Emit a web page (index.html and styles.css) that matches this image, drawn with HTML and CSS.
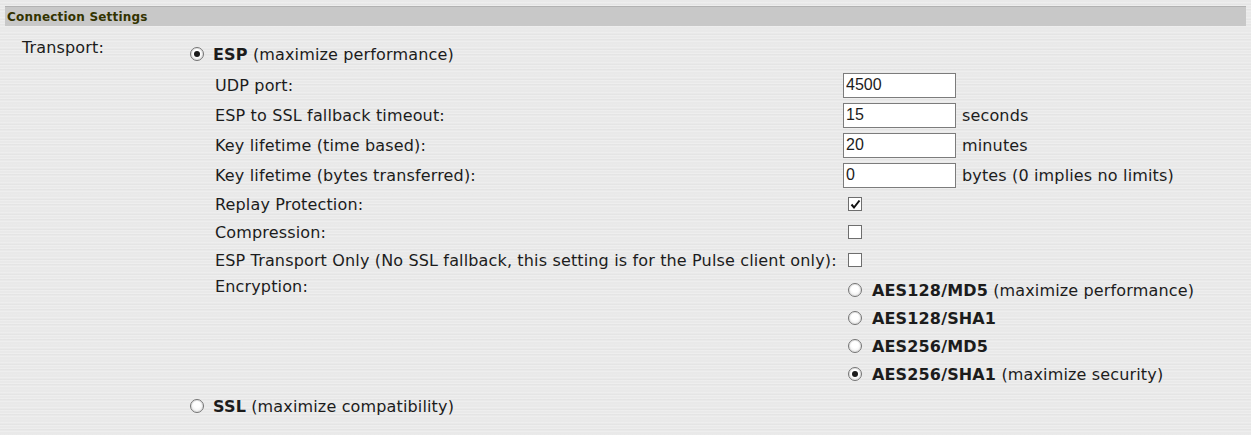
FILE: index.html
```html
<!DOCTYPE html>
<html>
<head>
<meta charset="utf-8">
<link rel="stylesheet" href="styles.css">
</head>
<body>
<div class="page">
  <div class="section-bar">Connection Settings</div>
  <div class="transport">
    <div class="field-label">Transport:</div>
    <div class="field-body">
      <div class="opt main-opt"><span class="radio checked"></span><span class="opt-text"><b>ESP</b> (maximize performance)</span></div>
      <div class="esp-grid">
        <div class="row input-row"><span class="lbl">UDP port:</span><span class="ctl"><input class="txt" type="text" value="4500"></span><span class="unit"></span></div>
        <div class="row input-row"><span class="lbl">ESP to SSL fallback timeout:</span><span class="ctl"><input class="txt" type="text" value="15"></span><span class="unit">seconds</span></div>
        <div class="row input-row"><span class="lbl">Key lifetime (time based):</span><span class="ctl"><input class="txt" type="text" value="20"></span><span class="unit">minutes</span></div>
        <div class="row input-row"><span class="lbl">Key lifetime (bytes transferred):</span><span class="ctl"><input class="txt" type="text" value="0"></span><span class="unit">bytes (0 implies no limits)</span></div>
        <div class="row check-row"><span class="lbl">Replay Protection:</span><span class="ctl"><span class="checkbox"><svg width="11" height="11" viewBox="0 0 11 11"><path d="M1.5 5.5 L4 8.5 L9.5 1.5" fill="none" stroke="#111" stroke-width="2"/></svg></span></span><span class="unit"></span></div>
        <div class="row check-row"><span class="lbl">Compression:</span><span class="ctl"><span class="checkbox"></span></span><span class="unit"></span></div>
        <div class="row check-row"><span class="lbl">ESP Transport Only (No SSL fallback, this setting is for the Pulse client only):</span><span class="ctl"><span class="checkbox"></span></span><span class="unit"></span></div>
        <div class="enc-row">
          <span class="lbl enc-lbl">Encryption:</span>
          <div class="enc-list">
            <div class="opt enc-opt"><span class="radio"></span><span class="opt-text"><b>AES128/MD5</b> (maximize performance)</span></div>
            <div class="opt enc-opt"><span class="radio"></span><span class="opt-text"><b>AES128/SHA1</b></span></div>
            <div class="opt enc-opt"><span class="radio"></span><span class="opt-text"><b>AES256/MD5</b></span></div>
            <div class="opt enc-opt"><span class="radio checked"></span><span class="opt-text"><b>AES256/SHA1</b> (maximize security)</span></div>
          </div>
        </div>
      </div>
      <div class="opt main-opt ssl-opt"><span class="radio"></span><span class="opt-text"><b>SSL</b> (maximize compatibility)</span></div>
    </div>
  </div>
</div>
</body>
</html>
```

FILE: styles.css
```css
html, body {
  margin: 0;
  padding: 0;
}
body {
  width: 1251px;
  height: 435px;
  overflow: hidden;
  background-color: #e9e9e9;
  background-image:
    repeating-linear-gradient(0deg, rgba(255,255,255,0.22) 0 1px, rgba(0,0,0,0) 1px 3px),
    repeating-linear-gradient(0deg, rgba(0,0,0,0.018) 0 1px, rgba(0,0,0,0) 1px 5px);
  font-family: "DejaVu Sans", Verdana, sans-serif;
  font-size: 16px;
  letter-spacing: 0.15px;
  color: #1c1c1c;
}
.page {
  padding-top: 6px;
}
.section-bar {
  margin: 0 5px;
  height: 19px;
  border-top: 1px solid #b2b2b2;
  background: #c8c8c8;
  color: #333300;
  font-weight: bold;
  font-size: 12px;
  letter-spacing: 0.2px;
  line-height: 20px;
  padding-left: 2px;
}
.transport {
  display: grid;
  grid-template-columns: 168px 1fr;
  padding-left: 22px;
  padding-top: 14px;
}
.field-label {
  line-height: 16px;
}
.opt {
  display: flex;
  align-items: center;
}
.main-opt {
  height: 28px;
}
.opt-text b {
  font-weight: bold;
}
.radio {
  box-sizing: border-box;
  width: 14px;
  height: 14px;
  border: 1px solid #747474;
  border-radius: 50%;
  background: radial-gradient(circle at 50% 40%, #ffffff 0 3px, #eeeeee 7px);
  box-shadow: inset 0 0 0 1px #e2e2e2;
  flex: none;
  display: flex;
  align-items: center;
  justify-content: center;
}
.radio.checked::after {
  content: "";
  width: 6px;
  height: 6px;
  border-radius: 50%;
  background: #1a1a1a;
}
.main-opt .radio {
  margin-right: 9px;
}
.esp-grid {
  margin-left: 25px;
  margin-top: 2px;
}
.row {
  display: grid;
  grid-template-columns: 628px 119px 1fr;
  align-items: center;
  white-space: nowrap;
}
.input-row {
  height: 30px;
}
.check-row {
  height: 28px;
}
.txt {
  box-sizing: border-box;
  width: 113px;
  height: 25px;
  border: 1px solid #7c7c7c;
  background: #fff;
  padding: 0 2px;
  margin: 0;
  font-family: "Liberation Sans", Arial, sans-serif;
  font-size: 16px;
  color: #1c1c1c;
  outline: none;
}
.ctl {
  display: flex;
  align-items: center;
}
.checkbox {
  box-sizing: border-box;
  width: 14px;
  height: 14px;
  margin-left: 5px;
  border: 1px solid #6e6e6e;
  background: #fff;
  display: flex;
  align-items: center;
  justify-content: center;
}
.checkbox svg {
  display: block;
}
.enc-row {
  display: grid;
  grid-template-columns: 628px 1fr;
  padding-top: 2px;
  white-space: nowrap;
}
.enc-lbl {
  padding-top: 2px;
  line-height: 18px;
}
.enc-opt {
  height: 28px;
  padding-left: 5px;
}
.enc-opt .radio {
  margin-right: 10px;
}
.ssl-opt {
  margin-top: 4px;
}
```
